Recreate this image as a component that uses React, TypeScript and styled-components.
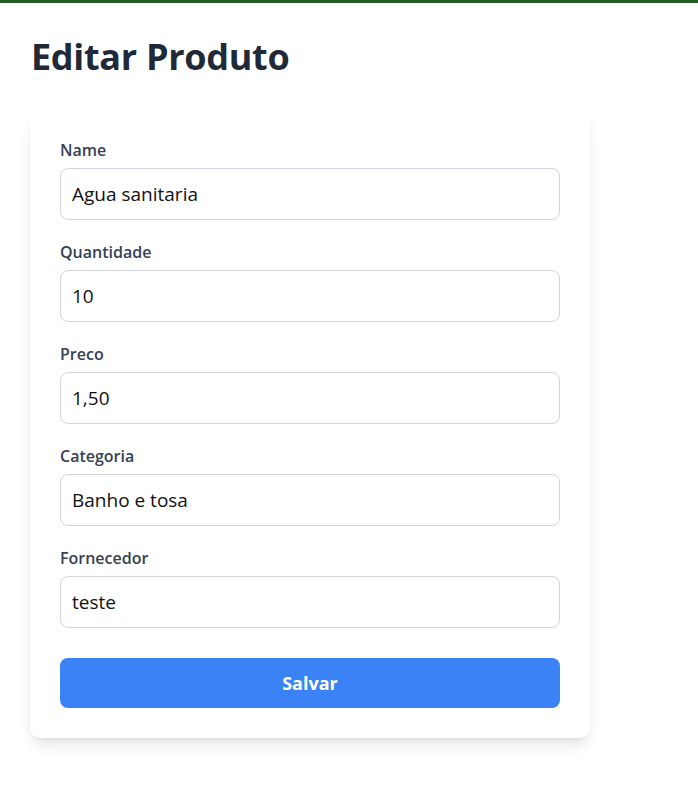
import React from "react";
import styled, { createGlobalStyle } from "styled-components";

const Global = createGlobalStyle`
  * { box-sizing: border-box; }
  html, body { margin: 0; padding: 0; background: #ffffff; }
  body { font-family: "Open Sans", "Noto Sans", Arial, sans-serif; }
`;

const Page = styled.div`
  border-top: 3px solid #225c24;
  padding: 34px 30px 40px 30px;
  min-height: 786px;
`;

const Title = styled.h1`
  margin: 0 0 31px 0;
  font-size: 36px;
  line-height: 40px;
  font-weight: 700;
  letter-spacing: -0.3px;
  color: #1f2937;
  padding-left: 1px;
`;

const Card = styled.form`
  width: 560px;
  background: #ffffff;
  border-radius: 10px;
  padding: 30px;
  box-shadow: 0 10px 15px -3px rgba(0, 0, 0, 0.1), 0 4px 6px -4px rgba(0, 0, 0, 0.1);
  display: flex;
  flex-direction: column;
`;

const Field = styled.div`
  display: flex;
  flex-direction: column;
  margin-bottom: 20px;
  &:last-of-type { margin-bottom: 30px; }
`;

const Label = styled.label`
  font-size: 16px;
  line-height: 24px;
  font-weight: 600;
  color: #374151;
  margin-bottom: 6px;
`;

const Input = styled.input`
  height: 52px;
  width: 100%;
  border: 1px solid #d1d5db;
  border-radius: 8px;
  padding: 0 11px;
  font-family: inherit;
  font-size: 19px;
  color: #111111;
  background: #ffffff;
  outline: none;
`;

const Button = styled.button`
  height: 50px;
  width: 100%;
  border: none;
  border-radius: 8px;
  background: #3b82f6;
  color: #ffffff;
  font-family: inherit;
  font-size: 18px;
  font-weight: 700;
  cursor: pointer;
`;

const fields = [
  { label: "Name", value: "Agua sanitaria" },
  { label: "Quantidade", value: "10" },
  { label: "Preco", value: "1,50" },
  { label: "Categoria", value: "Banho e tosa" },
  { label: "Fornecedor", value: "teste" },
];

export default function App() {
  return (
    <>
      <Global />
      <Page>
        <Title>Editar Produto</Title>
        <Card onSubmit={(e) => e.preventDefault()}>
          {fields.map((f) => (
            <Field key={f.label}>
              <Label>{f.label}</Label>
              <Input defaultValue={f.value} />
            </Field>
          ))}
          <Button type="submit">Salvar</Button>
        </Card>
      </Page>
    </>
  );
}
